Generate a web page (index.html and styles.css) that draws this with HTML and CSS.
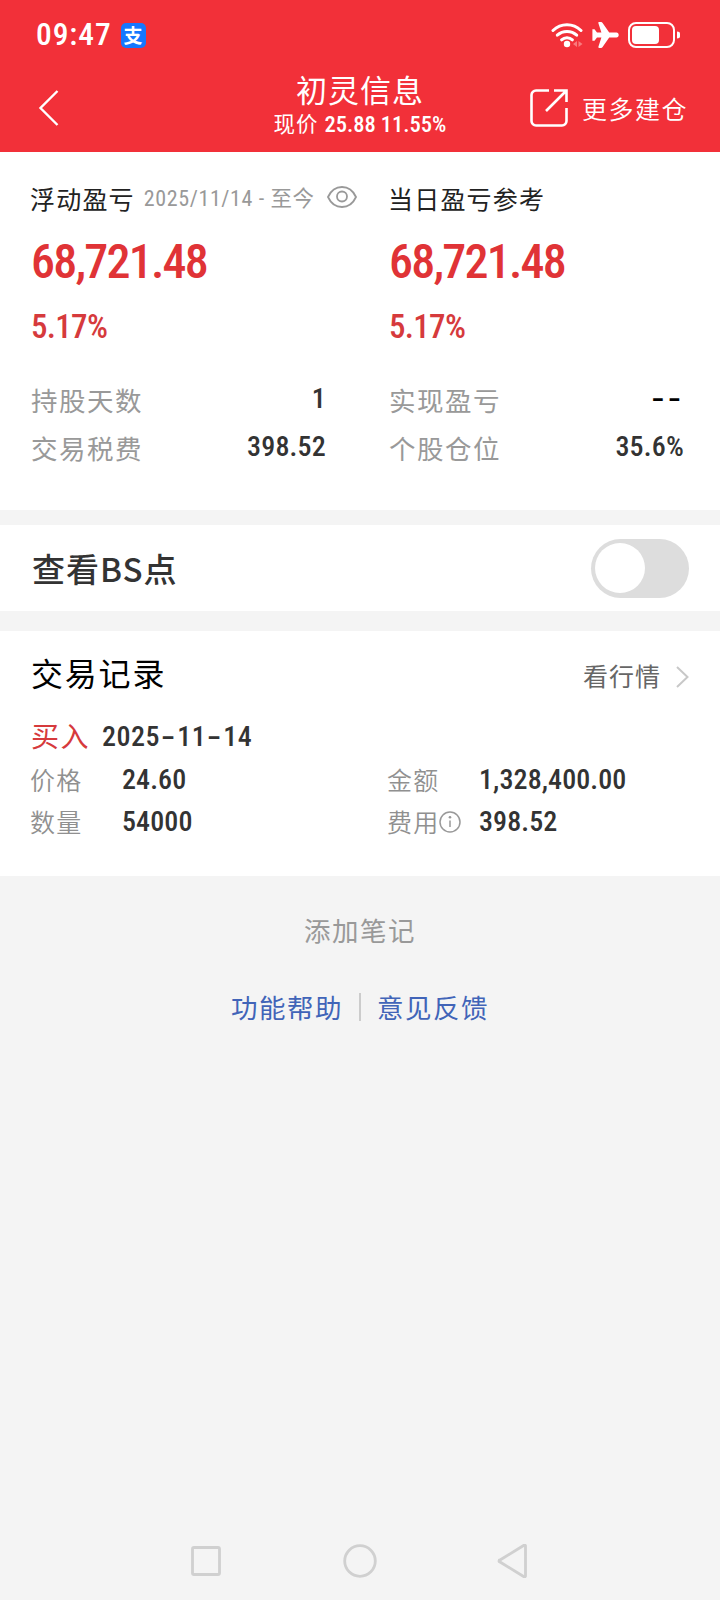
FILE: index.html
```html
<!DOCTYPE html>
<html lang="zh-CN">
<head>
    <meta charset="UTF-8">
    <meta name="viewport" content="width=device-width, initial-scale=1.0">
    <title>初灵信息</title>
    <link rel="stylesheet" href="styles.css">
</head>
<body>
    <header class="header">
        <div class="status-bar">
            <span class="clock num">09:47</span>
            <span class="pay-badge">支</span>
            <div class="status-icons">
                <svg class="wifi" width="32" height="26" viewBox="0 0 32 26" fill="none" stroke="#fff" stroke-width="3" stroke-linecap="round">
                    <path d="M2 8.5C10 .8 22 .8 30 8.5"/>
                    <path d="M6.3 13.2c5.4-5 14-5 19.4 0"/>
                    <path d="M10.6 17.8c3-2.8 7.8-2.8 10.8 0"/>
                    <circle cx="16" cy="22" r="3.2" fill="#fff" stroke="none"/>
                    <path d="M26 19v6l-4-3zM27.5 19v6l4-3z" fill="#f97a7d" stroke="none"/>
                </svg>
                <svg class="plane" width="27" height="26" viewBox="0 0 27 26" fill="#fff">
                    <path d="M24.5 10.6h-7.3L10.6 1C10.2.4 9.7.1 9 .1H7.2c-.7 0-1 .5-.8 1.100l3 9.400H5L2.500 7.300H.4v11.400h2.100L5 15.400h4.400l-3 9.400c-.2.600.1 1.100.8 1.100H9c.7 0 1.200-.3 1.600-.9l6.600-9.600h7.300c1.300 0 2.200-1.100 2.200-2.400s-.9-2.400-2.200-2.400z"/>
                </svg>
                <svg class="battery" width="52" height="26" viewBox="0 0 52 26" fill="none">
                    <rect x="1" y="1" width="45" height="24" rx="7" stroke="#fff" stroke-width="2"/>
                    <rect x="4" y="4" width="27" height="18" rx="4" fill="#fff"/>
                    <path d="M49 9.500c1.800 0 3 .8 3 2v3c0 1.200-1.200 2-3 2z" fill="#fff"/>
                </svg>
            </div>
        </div>
        <div class="nav">
            <svg class="back" width="22" height="38" viewBox="0 0 22 38" fill="none" stroke="#fff" stroke-width="2.400">
                <path d="M19.500 2 2.500 19l17 17"/>
            </svg>
            <div class="nav-title">
                <h1>初灵信息</h1>
                <p>现价 <span class="num">25.88 11.55%</span></p>
            </div>
            <div class="nav-more">
                <svg width="38" height="38" viewBox="0 0 38 38" fill="none" stroke="#fff" stroke-width="2.600">
                    <path d="M19 1.500H6A4.500 4.500 0 0 0 1.500 6v26A4.500 4.500 0 0 0 6 36.500h26a4.500 4.500 0 0 0 4.500-4.500V19"/>
                    <path d="M24 1.500h12.500V13M36 2 16 22"/>
                </svg>
                <span>更多建仓</span>
            </div>
        </div>
    </header>

    <section class="summary">
        <div class="summary-col">
            <div class="label">浮动盈亏
                <span class="range"><span class="num">2025/11/14 - </span>至今</span>
                <svg class="eye" width="30" height="22" viewBox="0 0 30 22" fill="none" stroke="#999" stroke-width="1.800">
                    <path d="M1 11C4 4.500 9 1 15 1s11 3.500 14 10c-3 6.500-8 10-14 10S4 17.500 1 11z"/>
                    <circle cx="15" cy="10.500" r="5"/>
                </svg>
            </div>
            <div class="amount num">68,721.48</div>
            <div class="percent num">5.17%</div>
            <div class="stat"><span>持股天数</span><b class="num">1</b></div>
            <div class="stat"><span>交易税费</span><b class="num">398.52</b></div>
        </div>
        <div class="summary-col">
            <div class="label">当日盈亏参考</div>
            <div class="amount num">68,721.48</div>
            <div class="percent num">5.17%</div>
            <div class="stat"><span>实现盈亏</span><b class="num none">--</b></div>
            <div class="stat"><span>个股仓位</span><b class="num">35.6%</b></div>
        </div>
    </section>

    <section class="bs-row">
        <span>查看BS点</span>
        <div class="switch"></div>
    </section>

    <section class="records">
        <div class="records-head">
            <h2>交易记录</h2>
            <a class="quote">看行情
                <svg width="13" height="22" viewBox="0 0 13 22" fill="none" stroke="#c8c8c8" stroke-width="2">
                    <path d="M1 1l10.500 10L1 21"/>
                </svg>
            </a>
        </div>
        <div class="trade-title"><span class="buy">买入</span><span class="date num">2025<i>-</i>11<i>-</i>14</span></div>
        <div class="trade-row">
            <span class="key">价格</span><b class="num">24.60</b>
            <span class="key">金额</span><b class="num">1,328,400.00</b>
        </div>
        <div class="trade-row">
            <span class="key">数量</span><b class="num">54000</b>
            <span class="key">费用<svg class="info" width="22" height="22" viewBox="0 0 22 22" fill="none" stroke="#999" stroke-width="1.500">
                <circle cx="11" cy="11" r="10"/>
                <path d="M11 9.500V16"/>
                <circle cx="11" cy="6.300" r="1.300" fill="#999" stroke="none"/>
            </svg></span><b class="num">398.52</b>
        </div>
    </section>

    <div class="add-note">添加笔记</div>
    <div class="links"><a>功能帮助</a><a>意见反馈</a></div>

    <footer class="system-nav">
        <svg width="34" height="34" viewBox="0 0 34 34"><rect x="3.500" y="3.500" width="27" height="27" rx="1.500"/></svg>
        <svg width="34" height="34" viewBox="0 0 34 34"><circle cx="17" cy="17" r="15.300"/></svg>
        <svg width="34" height="34" viewBox="0 0 34 34"><path d="M28.500 1.800v30.400a1 1 0 0 1-1.500.6L3 18a1 1 0 0 1 0-2L27 1.200a1 1 0 0 1 1.500.6z"/></svg>
    </footer>
</body>
</html>
```

FILE: styles.css
```css
* {
    box-sizing: border-box;
}

body {
    margin: 0;
    min-height: 1600px;
    display: flex;
    flex-direction: column;
    background-color: #f4f4f4;
    color: #333;
    font-family: "Noto Sans CJK SC", sans-serif;
    white-space: nowrap;
}

h1, h2, p {
    margin: 0;
    font-weight: 400;
}

.num {
    font-family: Roboto, sans-serif;
    font-stretch: 82%;
    font-weight: 460;
}

.header {
    height: 152px;
    background-color: #f23039;
    color: #fff;
}

.status-bar {
    height: 70px;
    padding: 0 40px 0 36px;
    display: flex;
    align-items: center;
}

.clock {
    font-size: 31.500px;
    letter-spacing: .900px;
    line-height: 70px;
}

.pay-badge {
    width: 25px;
    height: 25px;
    margin-left: 9px;
    border-radius: 5px;
    background-color: #1677ff;
    font-size: 19px;
    font-weight: 700;
    line-height: 23px;
    text-align: center;
}

.status-icons {
    display: flex;
    align-items: center;
    margin-left: auto;
}

.plane {
    margin-left: 9px;
}

.battery {
    margin-left: 9px;
}

.nav {
    height: 82px;
    padding: 0 32px;
    display: grid;
    grid-template-columns: 1fr auto 1fr;
}

.back {
    margin: 19px 0 0 6px;
}

.nav-title {
    text-align: center;
}

.nav-title h1 {
    font-size: 31px;
    letter-spacing: 1px;
    line-height: 38px;
}

.nav-title p {
    font-size: 21.500px;
    letter-spacing: 1px;
    line-height: 29px;
}

.nav-title .num {
    font-size: 22.500px;
    letter-spacing: 0;
}

.nav-more {
    display: flex;
    justify-content: flex-end;
    margin-top: 19px;
    font-size: 25px;
    font-weight: 350;
    letter-spacing: 1.500px;
    line-height: 38px;
}

.nav-more span {
    margin-left: 14px;
}

.summary {
    height: 358px;
    padding: 26px 36px 0 30px;
    display: grid;
    grid-template-columns: 296px 296px;
    column-gap: 62px;
    background-color: #fff;
}

.label {
    height: 40px;
    display: flex;
    align-items: center;
    font-size: 25px;
    letter-spacing: 1.200px;
    color: #222;
}

.range {
    margin-left: 9px;
    font-size: 21.500px;
    letter-spacing: .600px;
    line-height: 38px;
    color: #999;
}

.range .num {
    font-size: 22px;
    font-weight: 400;
    white-space: pre;
}

.eye {
    flex: none;
    margin: -3px 0 0 12px;
}

.amount {
    padding-left: 1px;
    font-size: 48px;
    letter-spacing: -1.800px;
    line-height: 87px;
    color: #e03336;
}

.percent {
    margin-bottom: 27px;
    padding-left: 1px;
    font-size: 33px;
    letter-spacing: -.700px;
    line-height: 44px;
    color: #d63a3c;
}

.stat {
    height: 48px;
    padding-left: 1px;
    display: flex;
    justify-content: space-between;
    font-size: 26.500px;
    letter-spacing: 1.500px;
    line-height: 48px;
    color: #999;
}

.stat b {
    font-size: 28px;
    letter-spacing: .200px;
    line-height: 46px;
    color: #333;
}

.stat .none {
    letter-spacing: 2px;
    line-height: 45px;
    color: #000;
    transform: scaleX(1.550);
    transform-origin: right;
}

.bs-row {
    height: 86px;
    margin-top: 15px;
    padding: 0 31px 1px 32px;
    display: flex;
    align-items: center;
    justify-content: space-between;
    background-color: #fff;
    font-size: 33px;
    font-weight: 500;
    letter-spacing: 1px;
}

.switch {
    width: 98px;
    height: 59px;
    margin-top: 1px;
    padding: 4px;
    border-radius: 30px;
    background-color: #ddd;
}

.switch::before {
    content: "";
    display: block;
    width: 50px;
    height: 50px;
    border-radius: 50%;
    background-color: #fff;
}

.records {
    height: 245px;
    margin-top: 20px;
    padding: 14px 31px 0 30px;
    background-color: #fff;
}

.records-head {
    height: 60px;
    display: flex;
    justify-content: space-between;
}

.records-head h2 {
    padding-left: 1px;
    font-size: 32px;
    letter-spacing: 1.800px;
    line-height: 54px;
    color: #000;
}

.quote {
    display: flex;
    align-items: center;
    font-size: 25px;
    letter-spacing: 1px;
    line-height: 60px;
    color: #666;
}

.quote svg {
    margin: 3px 0 0 15px;
}

.trade-title {
    height: 53px;
    display: flex;
    line-height: 60px;
}

.buy {
    padding-left: 1px;
    font-size: 28px;
    letter-spacing: 1.500px;
    color: #d63a3c;
}

.date {
    margin-left: 12px;
    font-size: 28px;
    letter-spacing: .500px;
    line-height: 63px;
}

.date i {
    display: inline-block;
    margin: 0 4px;
    font-style: normal;
    transform: scaleX(1.700);
}

.trade-row {
    height: 42px;
    display: grid;
    grid-template-columns: 92px 265px 92px auto;
    align-items: center;
    line-height: 41px;
}

.key {
    display: flex;
    align-items: center;
    font-size: 25px;
    font-weight: 350;
    letter-spacing: 1.200px;
    color: #909090;
}

.trade-row b {
    font-size: 28px;
    letter-spacing: .100px;
    line-height: 43px;
}

.add-note {
    margin-top: 34px;
    font-size: 26.500px;
    letter-spacing: 1.500px;
    line-height: 40px;
    text-align: center;
    color: #999;
}

.links {
    display: flex;
    justify-content: center;
    margin-top: 43px;
    font-size: 26.500px;
    letter-spacing: 1.500px;
    line-height: 28px;
    color: #4164b8;
}

.links a {
    padding: 0 16px;
}

.links a + a {
    border-left: 2px solid #ccc;
}

.system-nav {
    height: 78px;
    margin-top: auto;
    display: flex;
    justify-content: center;
    gap: 120px;
}

.system-nav svg {
    margin-top: 22px;
    fill: none;
    stroke: #d0d0d0;
    stroke-width: 2.800;
}
```
